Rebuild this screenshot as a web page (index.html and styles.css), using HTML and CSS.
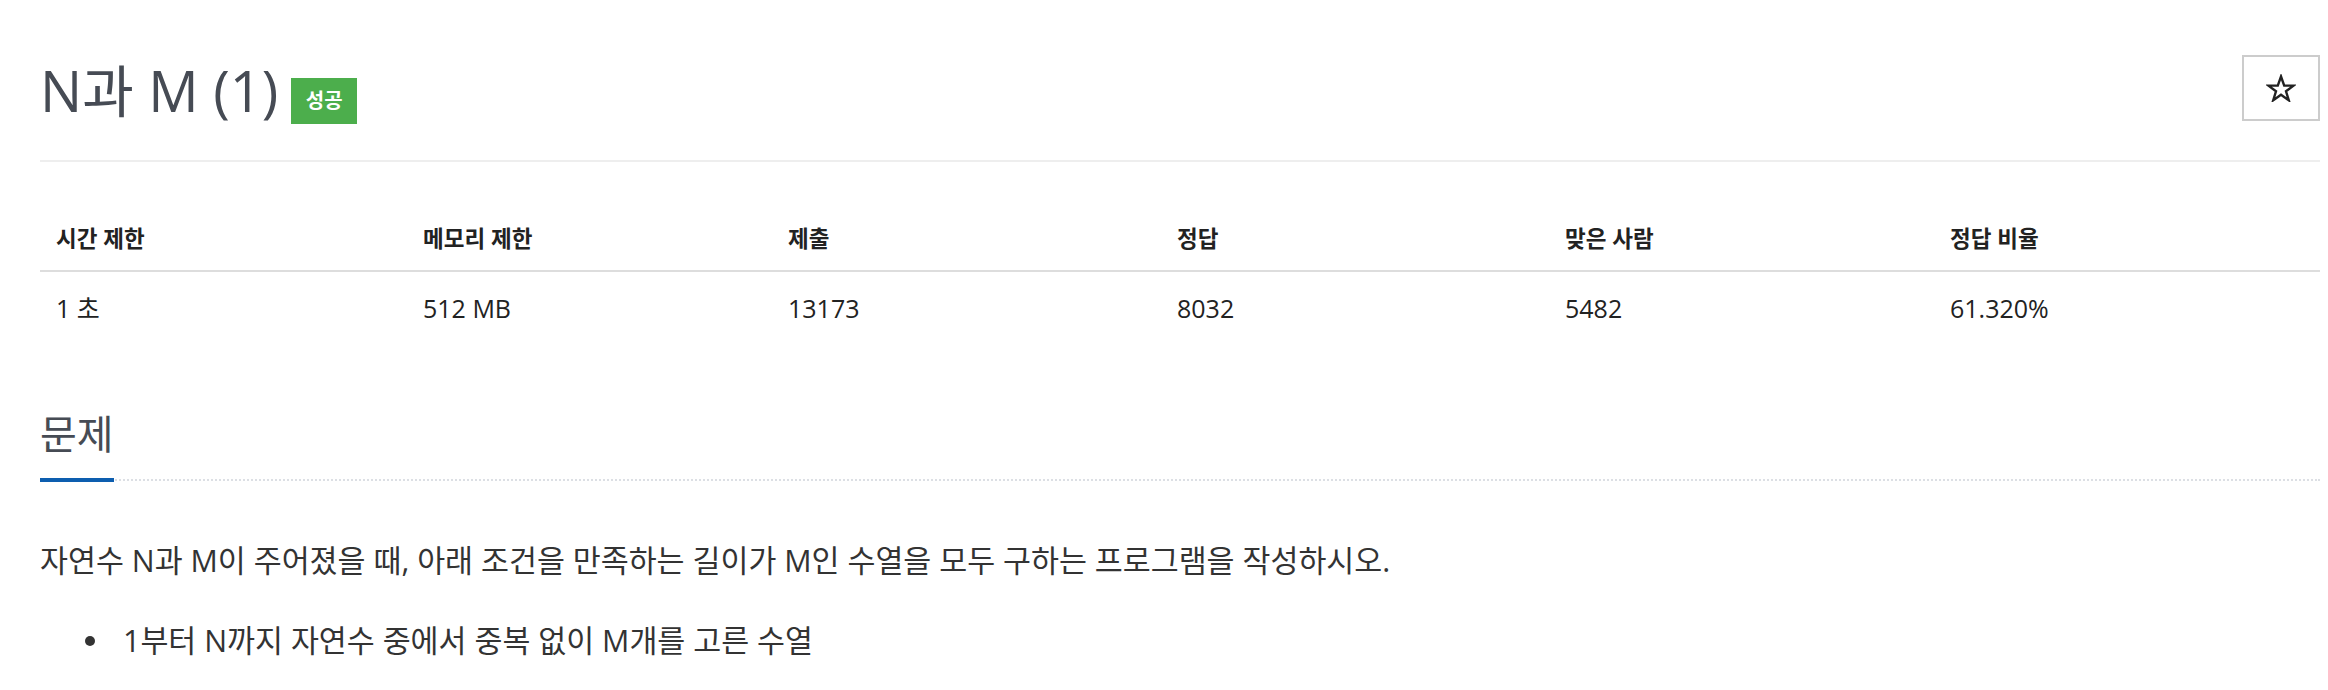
FILE: index.html
```html
<!DOCTYPE html>
<html>
<head>
<title>N과 M (1)</title>
<meta charset="UTF-8">
<meta name="viewport" content="width=device-width, initial-scale=1">
<link rel="stylesheet" href="styles.css">
</head>
<body>

<div class="page">
    <!-- 제목 -->
    <div class="title-row">
        <div class="title-wrap">
            <h1 class="title">N과 M (1)</h1>
            <span class="badge">성공</span>
        </div>
        <a class="star-btn" href="javascript:;">
            <svg width="30" height="28" viewBox="0 0 30 28">
                <polygon points="15,2.5 18.2,11.6 27.6,11.6 20,17.3 22.8,26.3 15,20.8 7.2,26.3 10,17.3 2.4,11.6 11.8,11.6" fill="none" stroke="#222" stroke-width="2.4" stroke-linejoin="miter"/>
            </svg>
        </a>
    </div>

    <!-- 문제 정보 -->
    <table class="info">
        <thead>
            <tr>
                <th class="c1">시간 제한</th>
                <th class="c2">메모리 제한</th>
                <th class="c3">제출</th>
                <th class="c4">정답</th>
                <th class="c5">맞은 사람</th>
                <th class="c6">정답 비율</th>
            </tr>
        </thead>
        <tbody>
            <tr>
                <td>1 초</td>
                <td>512 MB</td>
                <td>13173</td>
                <td>8032</td>
                <td>5482</td>
                <td>61.320%</td>
            </tr>
        </tbody>
    </table>

    <!-- 문제 -->
    <div class="section">
        <h2 class="headline"><span>문제</span></h2>
        <div class="problem-text">
            <p>자연수 N과 M이 주어졌을 때, 아래 조건을 만족하는 길이가 M인 수열을 모두 구하는 프로그램을 작성하시오.</p>
            <ul>
                <li>1부터 N까지 자연수 중에서 중복 없이 M개를 고른 수열</li>
            </ul>
        </div>
    </div>
</div>

</body>
</html>
```

FILE: styles.css
```css
body {
    margin: 0;
    background: #fff;
    font-family: "Open Sans", "Noto Sans CJK KR", sans-serif;
    color: #222;
}

.page {
    padding: 0 8px 0 40px;
}

/* 제목 */
.title-row {
    display: flex;
    align-items: flex-start;
    padding-top: 55px;
    padding-bottom: 36px;
    border-bottom: 2px solid #eee;
}

.title-wrap {
    display: flex;
    align-items: flex-start;
    gap: 13px;
    margin-top: 4px;
}

.title {
    margin: 0;
    font-size: 56px;
    line-height: 62px;
    font-weight: 400;
    color: #464b54;
}

.badge {
    display: inline-block;
    margin-top: 19px;
    width: 66px;
    height: 46px;
    line-height: 46px;
    text-align: center;
    background: #4cae4c;
    color: #fff;
    font-size: 20px;
    font-weight: 700;
}

.star-btn {
    margin-left: auto;
    width: 74px;
    height: 62px;
    border: 2px solid #ccc;
    display: flex;
    justify-content: center;
    align-items: center;
}

/* 문제 정보 표 */
.info {
    width: 100%;
    margin-top: 46px;
    border-collapse: collapse;
    text-align: left;
}

.info th {
    padding: 15px 16px;
    font-size: 22.5px;
    line-height: 32px;
    font-weight: 700;
    border-bottom: 2px solid #ddd;
}

.info td {
    padding: 18px 16px 14px;
    font-size: 25px;
    line-height: 36px;
}

.c1 { width: 335px; }
.c2 { width: 333px; }
.c3 { width: 357px; }
.c4 { width: 356px; }
.c5 { width: 353px; }

/* 문제 */
.section {
    margin-top: 68px;
}

.headline {
    display: flex;
    margin: 0;
    border-bottom: 2px dotted #dcdfe4;
}

.headline span {
    font-size: 40px;
    line-height: 52px;
    font-weight: 400;
    color: #464b54;
    padding-bottom: 18px;
    margin-bottom: -3px;
    border-bottom: 4px solid #0d5eaf;
}

.problem-text {
    font-size: 30.4px;
    line-height: 1.6;
    color: #333;
}

.problem-text p {
    margin: 56px 0 0;
}

.problem-text ul {
    margin: 31px 0 0;
    padding: 0;
}

.problem-text li {
    list-style: none;
    display: flex;
    align-items: center;
    padding-left: 45px;
}

.problem-text li::before {
    content: "";
    width: 10px;
    height: 10px;
    border-radius: 50%;
    background: #333;
    margin-right: 28px;
}
```
